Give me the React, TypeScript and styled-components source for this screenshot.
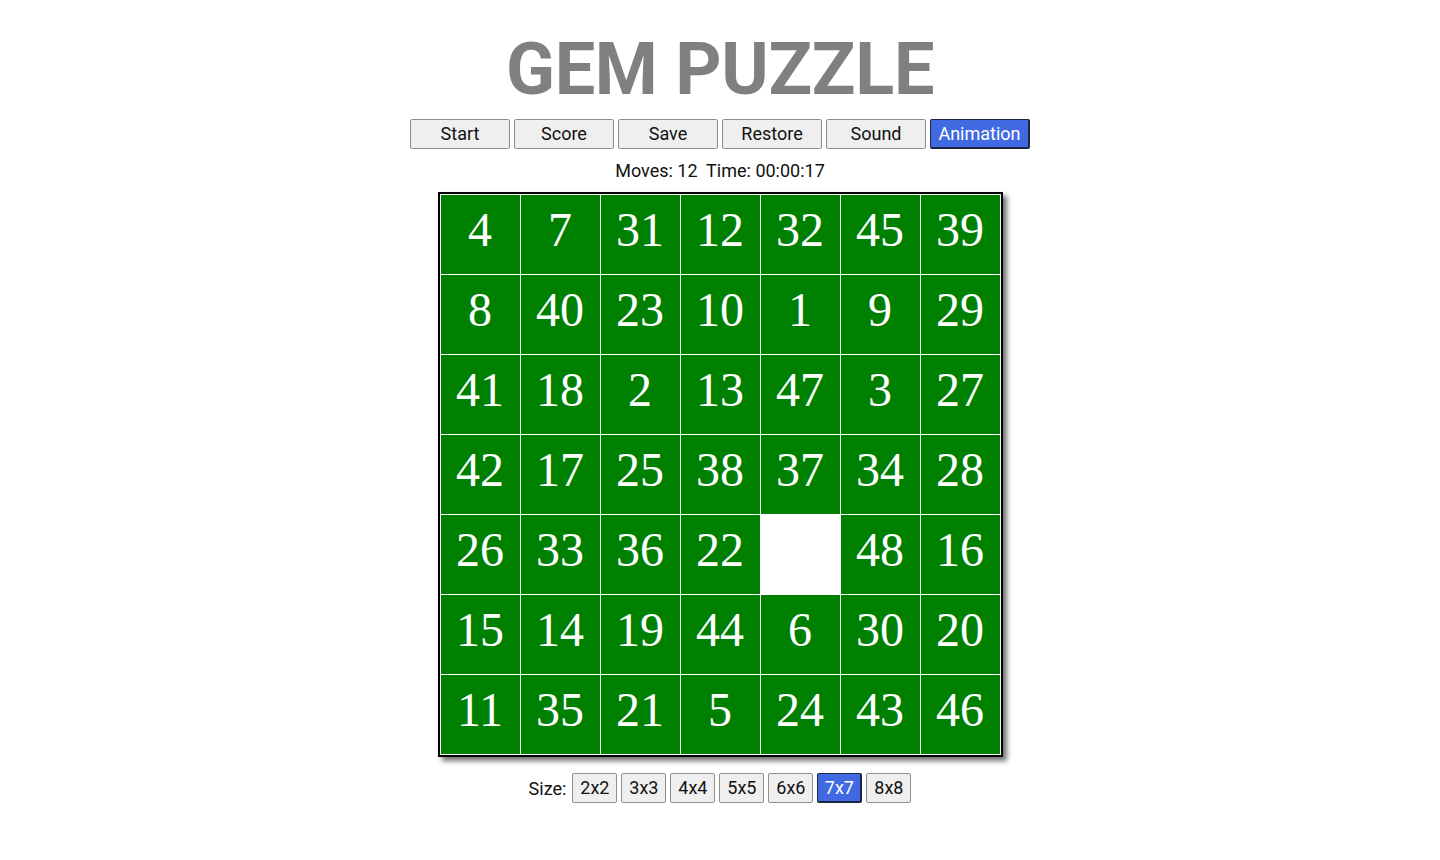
import React from "react";
import styled, { createGlobalStyle } from "styled-components";

const Global = createGlobalStyle`
  html, body { margin: 0; padding: 0; background: #fff; }
  body { font-family: Roboto, "Liberation Sans", sans-serif; color: #111; }
`;

const Page = styled.main`
  display: flex;
  flex-direction: column;
  align-items: center;
  padding-top: 30px;
`;

const Title = styled.h1`
  margin: 0;
  font-family: Roboto, sans-serif;
  font-weight: 700;
  font-size: 72px;
  line-height: 80px;
  color: #808080;
  letter-spacing: -0.3px;
`;

const Toolbar = styled.div`
  display: flex;
  gap: 4px;
  margin-top: 9px;
`;

const ToolButton = styled.button<{ $active?: boolean }>`
  width: 100px;
  height: 30px;
  padding: 0 0 1px;
  font-family: Roboto, sans-serif;
  font-size: 18px;
  color: ${(p) => (p.$active ? "#fff" : "#111")};
  background: ${(p) => (p.$active ? "#4169e1" : "#efefef")};
  border: 1px solid ${(p) => (p.$active ? "#1a2740" : "#8f8f8f")};
  border-width: ${(p) => (p.$active ? "1px 2px 2px 1px" : "1px")};
  border-radius: 2px;
  cursor: pointer;
`;

const Status = styled.div`
  margin-top: 11px;
  font-size: 18px;
  line-height: 22px;
  color: #111;
`;

const Board = styled.div`
  margin-top: 10px;
  border: 2px solid #000;
  background: #fff;
  padding: 1px;
  display: grid;
  grid-template-columns: repeat(7, 79px);
  grid-auto-rows: 79px;
  gap: 1px;
  box-shadow: 4px 4px 5px rgba(0, 0, 0, 0.55);
`;

const Tile = styled.div<{ $empty?: boolean }>`
  display: flex;
  align-items: center;
  justify-content: center;
  padding-bottom: 10px;
  box-sizing: border-box;
  background: ${(p) => (p.$empty ? "#fff" : "#008000")};
  color: #fff;
  font-family: "Liberation Serif", "Times New Roman", serif;
  font-size: 48px;
  line-height: 1;
  user-select: none;
`;

const SizeRow = styled.div`
  display: flex;
  align-items: center;
  gap: 4px;
  margin-top: 16px;
  font-family: Roboto, sans-serif;
  font-size: 18px;
`;

const SizeLabel = styled.span`
  margin-right: 2px;
`;

const SizeButton = styled.button<{ $active?: boolean }>`
  width: 45px;
  height: 30px;
  padding: 0 0 1px;
  font-family: Roboto, sans-serif;
  font-size: 18px;
  color: ${(p) => (p.$active ? "#fff" : "#111")};
  background: ${(p) => (p.$active ? "#4169e1" : "#efefef")};
  border: 1px solid ${(p) => (p.$active ? "#1a2740" : "#8f8f8f")};
  border-width: ${(p) => (p.$active ? "1px 2px 2px 1px" : "1px")};
  border-radius: 2px;
`;

const tiles = [
  4, 7, 31, 12, 32, 45, 39,
  8, 40, 23, 10, 1, 9, 29,
  41, 18, 2, 13, 47, 3, 27,
  42, 17, 25, 38, 37, 34, 28,
  26, 33, 36, 22, 0, 48, 16,
  15, 14, 19, 44, 6, 30, 20,
  11, 35, 21, 5, 24, 43, 46,
];

export default function App() {
  return (
    <Page>
      <Global />
      <Title>GEM PUZZLE</Title>
      <Toolbar>
        <ToolButton>Start</ToolButton>
        <ToolButton>Score</ToolButton>
        <ToolButton>Save</ToolButton>
        <ToolButton>Restore</ToolButton>
        <ToolButton>Sound</ToolButton>
        <ToolButton $active>Animation</ToolButton>
      </Toolbar>
      <Status>Moves: 12&nbsp; Time: 00:00:17</Status>
      <Board>
        {tiles.map((n, i) => (
          <Tile key={i} $empty={n === 0}>
            {n === 0 ? "" : n}
          </Tile>
        ))}
      </Board>
      <SizeRow>
        <SizeLabel>Size:</SizeLabel>
        {["2x2", "3x3", "4x4", "5x5", "6x6", "7x7", "8x8"].map((s) => (
          <SizeButton key={s} $active={s === "7x7"}>
            {s}
          </SizeButton>
        ))}
      </SizeRow>
    </Page>
  );
}
